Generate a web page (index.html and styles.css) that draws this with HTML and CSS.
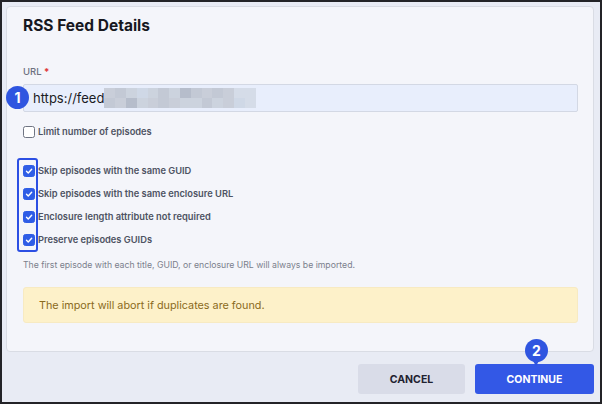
FILE: index.html
```html
<!DOCTYPE html>
<html>
<head>
<meta charset="utf-8">
<link rel="stylesheet" href="styles.css">
</head>
<body>
<div class="frame">
  <section class="card">
    <h1 class="title">RSS Feed Details</h1>
    <div class="field">
      <label class="label">URL <span class="req">*</span></label>
      <div class="input-wrap">
        <span class="badge badge-1">1</span>
        <div class="input">
          <span class="url">https://feed</span>
          <span class="blur">
            <i class="a"></i><i class="b"></i><i class="c"></i><i class="d"></i><i class="c"></i><i class="b"></i><i class="c"></i><i class="e"></i><i class="b"></i><i class="a"></i><i class="b"></i><i class="a"></i><i class="f"></i><i class="f"></i>
            <i class="b"></i><i class="a"></i><i class="e"></i><i class="c"></i><i class="a"></i><i class="b"></i><i class="a"></i><i class="c"></i><i class="c"></i><i class="b"></i><i class="c"></i><i class="a"></i><i class="d"></i><i class="f"></i>
          </span>
        </div>
      </div>
    </div>

    <div class="check-row limit">
      <span class="box"></span>
      <span class="check-label">Limit number of episodes</span>
    </div>

    <div class="checks">
      <div class="highlight"></div>
      <div class="check-row">
        <span class="box on"><svg viewBox="0 0 12 12"><path d="M3 6.3 L5.1 8.4 L9.2 3.8"/></svg></span>
        <span class="check-label">Skip episodes with the same GUID</span>
      </div>
      <div class="check-row">
        <span class="box on"><svg viewBox="0 0 12 12"><path d="M3 6.3 L5.1 8.4 L9.2 3.8"/></svg></span>
        <span class="check-label">Skip episodes with the same enclosure URL</span>
      </div>
      <div class="check-row">
        <span class="box on"><svg viewBox="0 0 12 12"><path d="M3 6.3 L5.1 8.4 L9.2 3.8"/></svg></span>
        <span class="check-label">Enclosure length attribute not required</span>
      </div>
      <div class="check-row">
        <span class="box on"><svg viewBox="0 0 12 12"><path d="M3 6.3 L5.1 8.4 L9.2 3.8"/></svg></span>
        <span class="check-label">Preserve episodes GUIDs</span>
      </div>
    </div>

    <p class="help">The first episode with each title, GUID, or enclosure URL will always be imported.</p>

    <div class="warning">The import will abort if duplicates are found.</div>
  </section>

  <div class="actions">
    <button class="btn cancel">CANCEL</button>
    <button class="btn continue">
      <span class="badge badge-2">2</span>
      CONTINUE
    </button>
  </div>
</div>
</body>
</html>
```

FILE: styles.css
```css
* { box-sizing: border-box; }
html, body { margin: 0; padding: 0; }
body {
  font-family: Inter, "Noto Sans", "Liberation Sans", sans-serif;
  background: #1f1f23;
}
.frame {
  width: 602px;
  height: 404px;
  border: 2px solid #232327;
  background: #e8ebf4;
  padding: 4px 6px 0 4px;
  display: flex;
  flex-direction: column;
}
.card {
  height: 346px;
  background: #f4f5fa;
  border: 1px solid #d9dce4;
  border-radius: 4px;
  padding: 0 15px 0 16px;
  display: flex;
  flex-direction: column;
}
.title {
  margin: 9px 0 0 0;
  font-size: 15.5px;
  line-height: 20px;
  font-weight: 700;
  color: #17181f;
}
.field { margin-top: 30px; }
.label {
  display: block;
  font-size: 9.5px;
  line-height: 12px;
  color: #6c7180;
  font-weight: 500;
}
.req { color: #e0393b; font-weight: 700; }
.input-wrap { position: relative; margin-top: 6px; }
.input {
  height: 28px;
  background: #e8eefc;
  border: 1px solid #d3d8e4;
  border-radius: 2px;
  display: flex;
  align-items: center;
  padding-left: 9px;
}
.url {
  font-size: 13px;
  color: #1b1c24;
  font-weight: 400;
}
.blur {
  display: grid;
  grid-template-columns: repeat(14, 10.8px);
  grid-template-rows: 10px 10px;
  margin-left: 0;
}
.blur i { display: block; }
.blur .a { background: #c9ced9; }
.blur .b { background: #c3c9d5; }
.blur .c { background: #ccd3de; }
.blur .d { background: #cfd8e6; }
.blur .e { background: #b6bdcb; }
.blur .f { background: #d5dce8; }

.badge {
  position: absolute;
  width: 23px;
  height: 23px;
  border-radius: 50%;
  background: #2f55e0;
  color: #fff;
  font-weight: 700;
  font-size: 14px;
  line-height: 23px;
  text-align: center;
  z-index: 2;
}
.badge-1 { left: -17px; top: 2px; }
.badge-2 { left: 50px; top: -25px; }
.badge-2::after {
  content: "";
  position: absolute;
  left: 8px;
  bottom: -4px;
  border-left: 3.5px solid transparent;
  border-right: 3.5px solid transparent;
  border-top: 5px solid #2f55e0;
}

.check-row {
  display: flex;
  align-items: center;
  height: 23px;
  gap: 3px;
}
.limit { margin-top: 8px; }
.box {
  width: 12px;
  height: 12px;
  border: 1.3px solid #6f7482;
  border-radius: 2.5px;
  background: #fff;
  flex: none;
  display: flex;
}
.box.on {
  background: #2f5de6;
  border-color: #2f5de6;
}
.box svg { width: 100%; height: 100%; }
.box path {
  fill: none;
  stroke: #fff;
  stroke-width: 1.7;
  stroke-linecap: round;
  stroke-linejoin: round;
}
.check-label {
  font-size: 9.3px;
  font-weight: 600;
  color: #4e5363;
}
.checks {
  position: relative;
  margin-top: 16px;
}
.highlight {
  position: absolute;
  left: -6px;
  top: -1px;
  width: 21px;
  height: 94px;
  border: 2px solid #2c4fe3;
  border-radius: 3px;
}
.help {
  margin: 8px 0 0 0;
  font-size: 8.7px;
  line-height: 12px;
  color: #7b808c;
}
.warning {
  margin-top: 16px;
  height: 36px;
  background: #fdf1c9;
  border: 1px solid #f7eac2;
  border-radius: 3px;
  color: #8a6a1c;
  font-size: 10.8px;
  display: flex;
  align-items: center;
  padding-left: 15px;
}
.actions {
  display: flex;
  justify-content: flex-end;
  gap: 10px;
  margin-top: 12px;
  padding-right: 0;
}
.btn {
  position: relative;
  height: 30px;
  border: none;
  border-radius: 3px;
  font-family: inherit;
  font-size: 10.5px;
  font-weight: 700;
  padding: 0;
}
.cancel { width: 107px; background: #d9dce8; color: #1f2230; }
.continue { width: 119px; background: #3358e6; color: #fff; }
```
